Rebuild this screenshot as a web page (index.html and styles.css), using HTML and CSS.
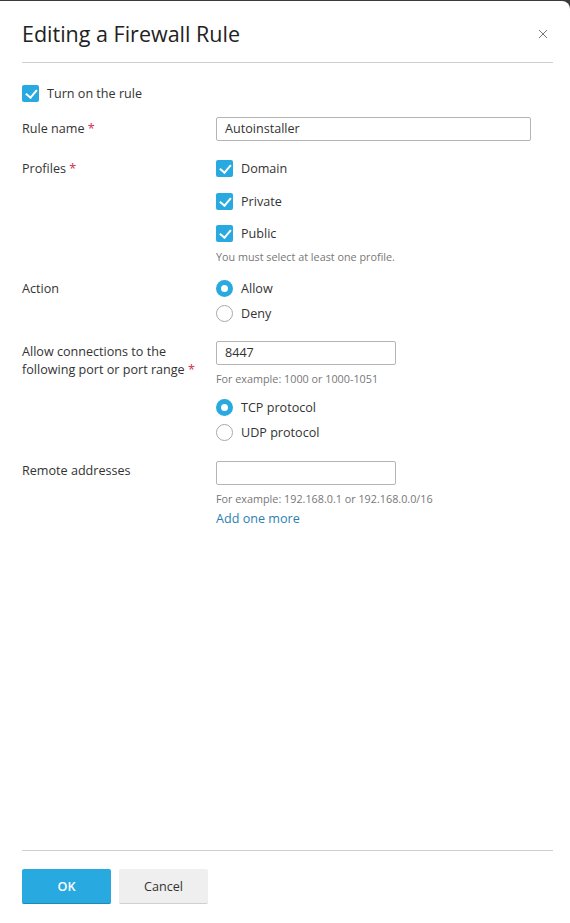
FILE: index.html
```html
<!DOCTYPE html>
<html>
<head>
<meta charset="utf-8">
<link rel="stylesheet" href="styles.css">
</head>
<body>
<div class="dialog">
  <div class="header">
    <h1 class="title">Editing a Firewall Rule</h1>
    <span class="close">
      <svg width="10" height="10" viewBox="0 0 10 10"><path d="M1 1L9 9M9 1L1 9" stroke="#777" stroke-width="1" fill="none"/></svg>
    </span>
  </div>
  <div class="body">
    <label class="check turn-on"><span class="box"></span>Turn on the rule</label>

    <div class="row row-name">
      <div class="label lh24">Rule name <span class="req">*</span></div>
      <div class="field"><div class="input wide">Autoinstaller</div></div>
    </div>

    <div class="row row-profiles">
      <div class="label lh17">Profiles <span class="req">*</span></div>
      <div class="field">
        <label class="check"><span class="box"></span>Domain</label>
        <label class="check item"><span class="box"></span>Private</label>
        <label class="check item"><span class="box"></span>Public</label>
        <div class="hint hint-profiles">You must select at least one profile.</div>
      </div>
    </div>

    <div class="row row-action">
      <div class="label lh17">Action</div>
      <div class="field">
        <label class="radio"><span class="dot on"></span>Allow</label>
        <label class="radio ritem"><span class="dot"></span>Deny</label>
      </div>
    </div>

    <div class="row row-port">
      <div class="label port-label">Allow connections to the following port or port range <span class="req">*</span></div>
      <div class="field">
        <div class="input narrow">8447</div>
        <div class="hint hint-input">For example: 1000 or 1000-1051</div>
        <label class="radio tcp"><span class="dot on"></span>TCP protocol</label>
        <label class="radio ritem"><span class="dot"></span>UDP protocol</label>
      </div>
    </div>

    <div class="row row-remote">
      <div class="label lh20">Remote addresses</div>
      <div class="field">
        <div class="input narrow"></div>
        <div class="hint hint-input">For example: 192.168.0.1 or 192.168.0.0/16</div>
        <a class="link">Add one more</a>
      </div>
    </div>
  </div>
  <div class="footer">
    <button class="btn ok">OK</button>
    <button class="btn cancel">Cancel</button>
  </div>
</div>
</body>
</html>
```

FILE: styles.css
```css
html, body {
  margin: 0;
  padding: 0;
  height: 100%;
}
body {
  background: #3a3a3a;
  font-family: "Open Sans", "Noto Sans", sans-serif;
  font-size: 12.6px;
  color: #333;
  padding-top: 1px;
  box-sizing: border-box;
}
.dialog {
  background: #fff;
  height: 922px;
  border-top-right-radius: 8px;
  padding: 0 17px 0 22px;
  display: flex;
  flex-direction: column;
  box-sizing: border-box;
}
.header {
  display: flex;
  align-items: center;
  justify-content: space-between;
  padding: 18px 0 13px;
  border-bottom: 1px solid #cfcfcf;
}
.title {
  margin: 0;
  font-size: 21.5px;
  font-weight: 400;
  line-height: 30px;
  color: #222;
}
.close {
  display: flex;
  margin-right: 5px;
}
.body {
  flex: 1;
}
.check, .radio {
  display: flex;
  align-items: center;
  line-height: 17px;
  height: 17px;
}
.box {
  width: 17px;
  height: 17px;
  border-radius: 2px;
  background: #28aae1;
  margin-right: 8px;
  position: relative;
  flex: none;
}
.box::after {
  content: "";
  position: absolute;
  left: 5.5px;
  top: 2px;
  width: 4.5px;
  height: 9px;
  border: solid #fff;
  border-width: 0 2px 2px 0;
  transform: rotate(40deg);
}
.turn-on {
  margin-top: 22px;
}
.row {
  display: grid;
  grid-template-columns: 194px 1fr;
}
.req {
  color: #d6294f;
}
.lh24 { line-height: 24px; }
.lh17 { line-height: 17px; }
.lh20 { line-height: 20px; }
.row-name { margin-top: 15px; }
.input {
  height: 24px;
  box-sizing: border-box;
  border: 1px solid #b5b5b5;
  border-radius: 2px;
  padding: 0 8px;
  line-height: 22px;
}
.wide { width: 315px; }
.narrow { width: 180px; }
.row-profiles { margin-top: 19px; }
.item { margin-top: 15.5px; }
.hint {
  font-size: 10.8px;
  line-height: 16px;
  color: #777;
}
.hint-profiles { margin-top: 7px; }
.row-action { margin-top: 15px; }
.dot {
  width: 17px;
  height: 17px;
  box-sizing: border-box;
  border-radius: 50%;
  border: 1px solid #a9a9a9;
  margin-right: 8px;
  flex: none;
  background: #fff;
}
.dot.on {
  border: 5px solid #28aae1;
}
.ritem { margin-top: 8px; }
.row-port { margin-top: 19px; }
.port-label {
  line-height: 18px;
  padding-top: 2px;
}
.hint-input { margin-top: 6px; }
.tcp { margin-top: 12px; }
.row-remote { margin-top: 20px; }
.link {
  display: block;
  margin-top: 3px;
  color: #2b7fb0;
  line-height: 18px;
}
.footer {
  border-top: 1px solid #cfcfcf;
  padding: 18px 0 19px;
  display: flex;
  gap: 8px;
}
.btn {
  font-family: "Open Sans", "Noto Sans", sans-serif;
  font-size: 12.6px;
  height: 35px;
  width: 89px;
  border: none;
  border-radius: 2px;
  cursor: pointer;
}
.ok {
  background: #28aae1;
  color: #fff;
  font-weight: 600;
  border-bottom: 1px solid #1f8ab8;
}
.cancel {
  background: #efefef;
  color: #333;
  border-bottom: 1px solid #d0d0d0;
}
```
